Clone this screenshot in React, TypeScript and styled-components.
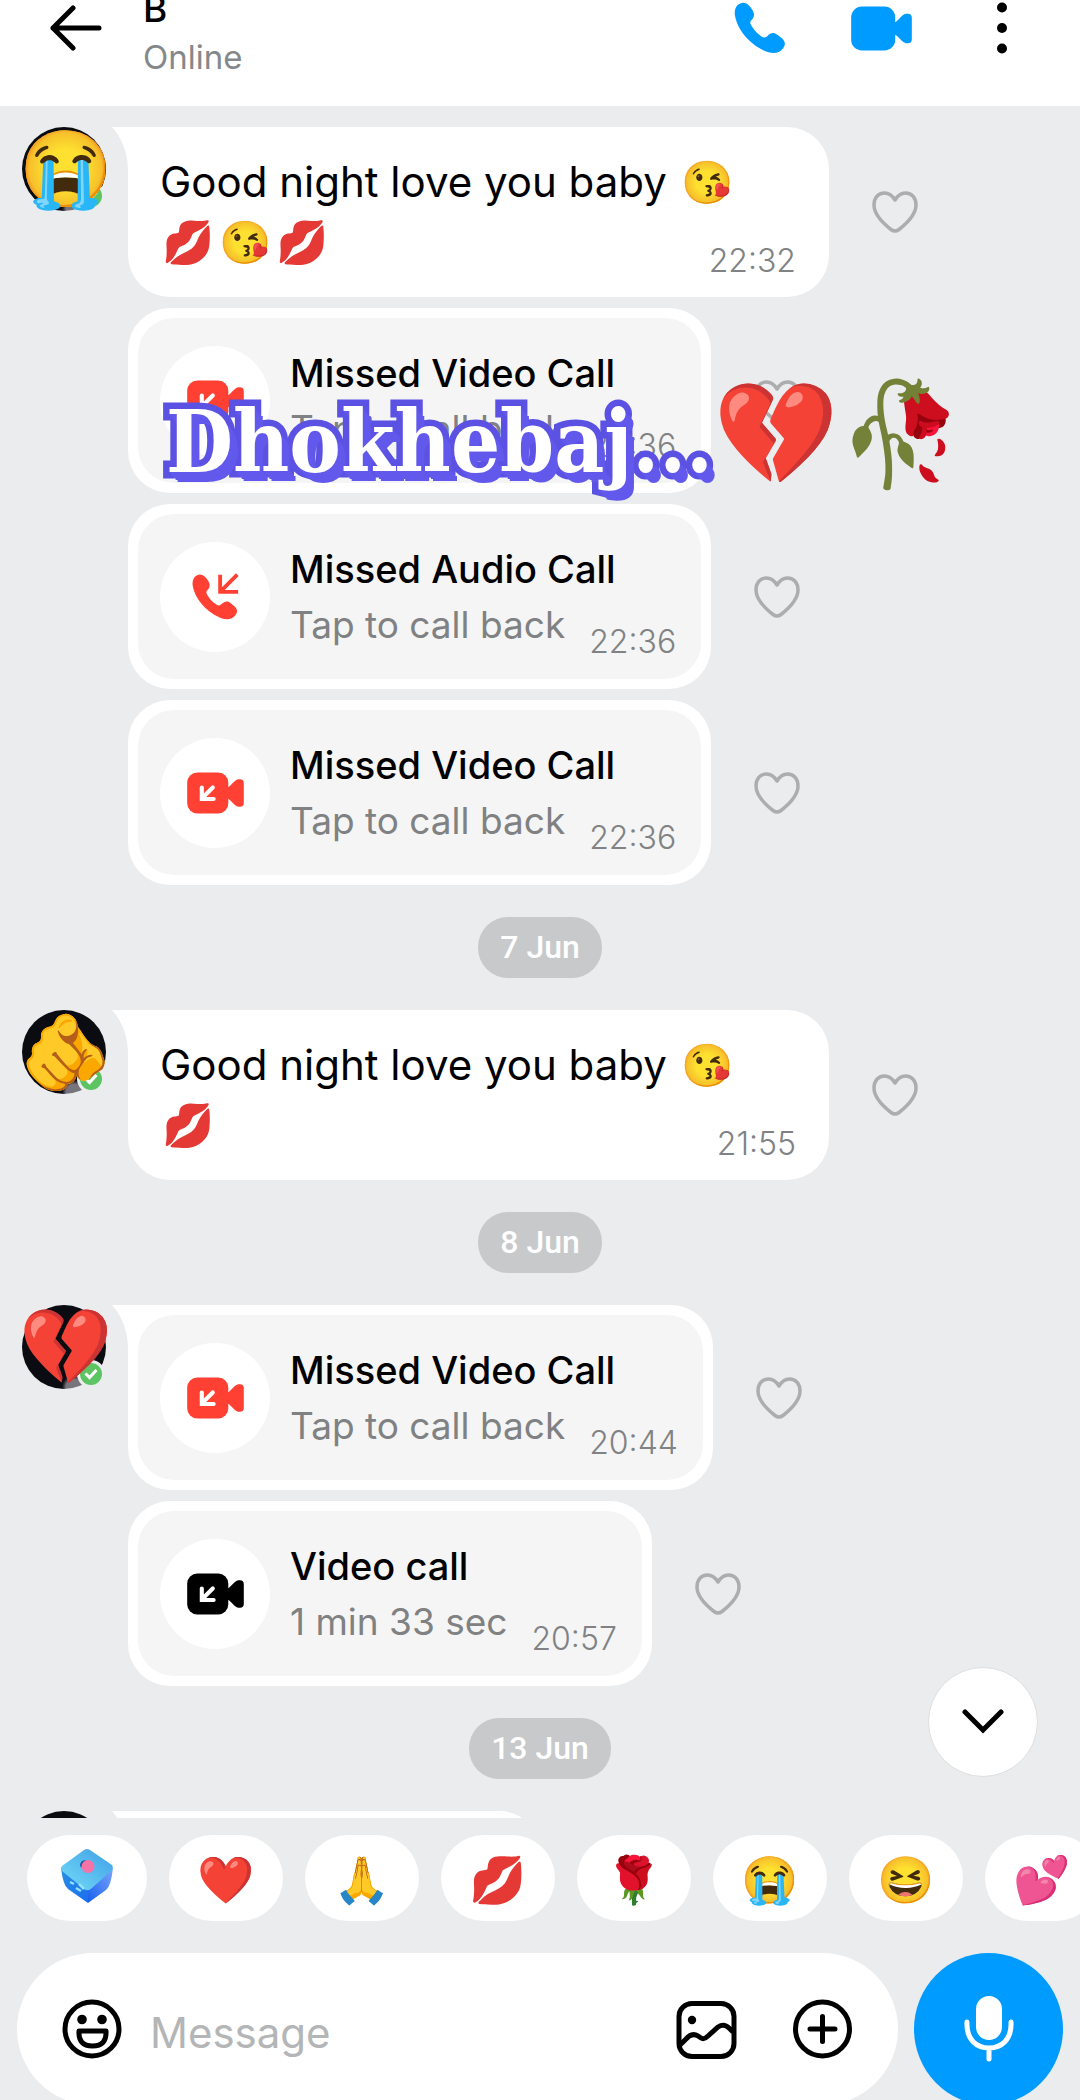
import React from "react";
import styled, { createGlobalStyle } from "styled-components";

const GlobalStyle = createGlobalStyle`
  * { box-sizing: border-box; }
  body {
    margin: 0;
    background: #eaecee;
    color: #000;
    font-family: Inter, "Liberation Sans", sans-serif;
  }
  button {
    border: 0;
    padding: 0;
    background: none;
    color: inherit;
    font: inherit;
    cursor: pointer;
  }
  svg { display: block; }
`;

const emojiFont = `"Noto Color Emoji", "Noto Sans", sans-serif`;
const blue = "#009bff";
const red = "#ff4033";

const Shell = styled.div`
  display: flex;
  flex-direction: column;
  height: 100vh;
  overflow: hidden;
`;

/* ---------- header ---------- */

const Header = styled.header`
  display: flex;
  align-items: center;
  flex: none;
  height: 106px;
  padding: 0 52px 50px 50px;
  background: #fff;
`;

const Contact = styled.div`
  flex: 1;
  padding-top: 10px;
  margin-left: 41px;
`;

const ContactName = styled.h1`
  margin: 0;
  font-size: 37px;
  line-height: 48px;
  font-weight: 500;
`;

const Presence = styled.p`
  margin: 0;
  font-size: 33px;
  line-height: 48px;
  color: #85888a;
`;

const HeaderActions = styled.div`
  display: flex;
  align-items: center;
  gap: 64px;
`;

const IconButton = styled.button<{ $color?: string }>`
  display: flex;
  align-items: center;
  justify-content: center;
  flex: none;
  min-width: 52px;
  color: ${(p) => p.$color || "#000"};
`;

/* ---------- chat ---------- */

const Chat = styled.main`
  position: relative;
  display: flex;
  flex-direction: column;
  flex: 1;
  min-height: 0;
  gap: 32px;
  padding-top: 21px;
  overflow: hidden;
`;

const Group = styled.section`
  display: flex;
  align-items: flex-start;
  flex: none;
  gap: 22px;
  padding-left: 22px;
`;

const Stack = styled.div`
  display: flex;
  flex-direction: column;
  flex: 1;
  gap: 11px;
`;

const Message = styled.div`
  display: flex;
  align-items: center;
  gap: 43px;
`;

const AvatarCircle = styled.div`
  position: relative;
  flex: none;
  width: 84px;
  height: 84px;
  border-radius: 50%;
  background: radial-gradient(circle at 62% 98%, #77747c 0 8px, transparent 12px), #0a0c12;
`;

const AvatarSticker = styled.span`
  position: absolute;
  inset: 0 -6px 0 -2px;
  display: flex;
  align-items: center;
  justify-content: center;
  font: 75px/84px ${emojiFont};
`;

const Badge = styled.span`
  position: absolute;
  right: 1px;
  bottom: 1px;
  display: flex;
  align-items: center;
  justify-content: center;
  width: 28px;
  height: 28px;
  border: 3px solid #eaecee;
  border-radius: 50%;
  background: #5cc463;
  color: #fff;
`;

const Bubble = styled.div<{ $tail?: boolean; $width?: number }>`
  position: relative;
  width: ${(p) => (p.$width ? `${p.$width}px` : "auto")};
  max-width: 65vw;
  border-radius: ${(p) => (p.$tail ? "0 42px 42px 42px" : "42px")};
  background: #fff;
  &::before {
    content: "";
    display: ${(p) => (p.$tail ? "block" : "none")};
    position: absolute;
    top: 0;
    left: -16px;
    width: 16px;
    height: 44px;
    background: #fff;
    clip-path: path("M0 0H16V44C16 26 10 11 0 0Z");
  }
`;

const TextBody = styled.div`
  display: grid;
  min-height: 170px;
  padding: 25px 33px 16px 32px;
`;

const Words = styled.p`
  grid-area: 1 / 1;
  margin: 0;
  font-size: 42px;
  line-height: 60px;
`;

const InlineEmoji = styled.span`
  display: inline-block;
  width: 57px;
  font-family: ${emojiFont};
  line-height: 48px;
  text-align: center;
`;

const Time = styled.time`
  grid-area: 1 / 1;
  align-self: end;
  justify-self: end;
  font-size: 32px;
  line-height: 40px;
  font-weight: 300;
  color: #808284;
`;

const CallFrame = styled.div`
  padding: 10px;
`;

const CallBody = styled.div`
  display: flex;
  align-items: center;
  min-height: 165px;
  padding: 0 25px 0 22px;
  border-radius: 36px;
  background: #f5f5f5;
`;

const CallIcon = styled.div<{ $color: string }>`
  display: flex;
  align-items: center;
  justify-content: center;
  flex: none;
  width: 110px;
  height: 110px;
  margin-right: 20px;
  border-radius: 50%;
  background: #fff;
  color: ${(p) => p.$color};
`;

const CallTitle = styled.h2`
  margin: 0;
  font-size: 38px;
  line-height: 56px;
  font-weight: 500;
  white-space: nowrap;
`;

const CallNote = styled.div`
  display: flex;
  gap: 24px;
  height: 56px;
  font-size: 37px;
  line-height: 56px;
  color: #7f8182;
  white-space: nowrap;
  ${Time} {
    margin-bottom: -9px;
  }
`;

const CallText = styled.div``;

const DayRow = styled.div`
  display: flex;
  justify-content: center;
  flex: none;
`;

const DayPill = styled.span`
  padding: 0 22px;
  border-radius: 30px;
  background: #c7c9ca;
  color: #fff;
  font-family: Roboto, sans-serif;
  font-size: 32px;
  line-height: 61px;
  font-weight: 500;
`;

const Sticker = styled.div`
  position: absolute;
  top: 269px;
  left: 166px;
  display: flex;
  align-items: flex-start;
`;

const StickerWord = styled.span`
  padding-top: 7px;
  font: 700 86px/120px "DejaVu Serif Condensed", "DejaVu Serif", serif;
  color: #fff;
  -webkit-text-stroke: 13px #5b52e3;
  paint-order: stroke fill;
  text-shadow: 1px 2px #6259ec, 2px 4px #6259ec, 4px 6px #6259ec, 6px 8px #6259ec, 8px 10px #6259ec;
`;

const StickerEmoji = styled.span`
  font: 101px/120px ${emojiFont};
`;

const ScrollDown = styled.button`
  position: absolute;
  right: 42px;
  bottom: 41px;
  display: flex;
  align-items: center;
  justify-content: center;
  width: 110px;
  height: 110px;
  border: 1px solid #dcdedf;
  border-radius: 50%;
  background: #fff;
`;

/* ---------- footer ---------- */

const Footer = styled.footer`
  flex: none;
  margin-bottom: -5px;
`;

const QuickRow = styled.div`
  display: flex;
  gap: 22px;
  padding: 17px 0 0 27px;
  overflow: hidden;
`;

const Quick = styled.button<{ $wide?: boolean }>`
  display: flex;
  align-items: center;
  justify-content: center;
  flex: none;
  width: ${(p) => (p.$wide ? 120 : 114)}px;
  height: 86px;
  padding-top: ${(p) => (p.$wide ? 0 : 4)}px;
  padding-bottom: ${(p) => (p.$wide ? 4 : 0)}px;
  border-radius: 43px;
  background: #fff;
  font: 46px/60px ${emojiFont};
`;

const ComposerRow = styled.form`
  display: flex;
  gap: 16px;
  padding: 32px 17px 0;
`;

const Composer = styled.div`
  display: flex;
  align-items: center;
  flex: 1;
  min-width: 0;
  height: 152px;
  padding: 0 45px;
  border-radius: 76px;
  background: #fff;
`;

const MessageInput = styled.input`
  flex: 1;
  min-width: 0;
  height: 70px;
  margin: 0 24px 0 28px;
  padding: 6px 0 0;
  border: 0;
  outline: 0;
  background: none;
  color: #000;
  font: 42px/60px Inter, sans-serif;
  &::placeholder { color: #b3b5b6; opacity: 1; }
`;

const ComposerTools = styled.div`
  display: flex;
  align-items: center;
  gap: 55px;
`;

const MicButton = styled.button`
  display: flex;
  align-items: center;
  justify-content: center;
  flex: none;
  width: 149px;
  height: 152px;
  border-radius: 50%;
  background: ${blue};
  color: #fff;
`;

/* ---------- icons ---------- */

const HANDSET =
  "M9 2C13 1 17 4 20 9C23 14 22 17 19 20C17 22 18 24 20 27C23 32 27 35 30 37C33 39 35 37 36 36C39 33 42 32 46 35L51 39C55 43 54 46 52 49C48 54 43 55 36 53C20 47 5 32 2 15C1 8 4 3 9 2Z";

const BackIcon = () => (
  <svg width="52" height="46" viewBox="0 0 52 46" fill="none" stroke="currentColor" strokeWidth="5" strokeLinecap="round" strokeLinejoin="round">
    <path d="M49 23H3M23 3L3 23L23 43" />
  </svg>
);

const PhoneIcon = () => (
  <svg width="54" height="54" viewBox="0 0 56 56" fill="currentColor">
    <path d={HANDSET} />
  </svg>
);

const MissedPhoneIcon = () => (
  <svg width="48" height="48" viewBox="0 0 56 56" fill="currentColor">
    <path d={HANDSET} />
    <path d="M54 2L34 22M34 2V22H55" fill="none" stroke="currentColor" strokeWidth="4.5" />
  </svg>
);

const VideoIcon = ({ size = 61, arrow = false }: { size?: number; arrow?: boolean }) => (
  <svg width={size} height={Math.round((size * 46) / 62)} viewBox="0 0 62 46" fill="currentColor">
    <rect x="0" y="0.5" width="45" height="45" rx="11" />
    <path d="M44 17C49 15 51 9 56 8Q62 7 62 12V34Q62 39 56 38C51 37 49 31 44 29Z" />
    {arrow && <path d="M28 17L17 28M16 17V29.5H29" fill="none" stroke="#fff" strokeWidth="4.5" strokeLinecap="round" />}
  </svg>
);

const DotsIcon = () => (
  <svg width="12" height="54" viewBox="0 0 12 54" fill="currentColor">
    <circle cx="6" cy="6.500" r="5" />
    <circle cx="6" cy="27" r="5" />
    <circle cx="6" cy="47.500" r="5" />
  </svg>
);

const HeartIcon = () => (
  <svg width="46" height="42" viewBox="0 0 46 42" fill="none" stroke="#abadae" strokeWidth="3.5" strokeLinejoin="round">
    <path d="M23 9C20 4 16 2 12.500 2C6 2 2 7 2 14C2 24 12 33 19 38.500Q23 41.500 27 38.500C34 33 44 24 44 14C44 7 40 2 33.500 2C30 2 26 4 23 9Z" />
  </svg>
);

const ChevronIcon = () => (
  <svg width="42" height="26" viewBox="0 0 42 26" fill="none" stroke="currentColor" strokeWidth="5" strokeLinecap="round" strokeLinejoin="miter">
    <path d="M3 3L21 21L39 3" />
  </svg>
);

const CheckIcon = () => (
  <svg width="14" height="12" viewBox="0 0 14 12" fill="none" stroke="currentColor" strokeWidth="3">
    <path d="M1.500 5.500L5.500 9.500L12.500 2" />
  </svg>
);

const CubeIcon = () => (
  <svg width="54" height="56" viewBox="0 0 54 56">
    <defs>
      <linearGradient id="cubeTop" x1="0" y1="1" x2="1" y2="0">
        <stop offset="0" stopColor="#74dcf8" />
        <stop offset="1" stopColor="#3f9fe6" />
      </linearGradient>
      <linearGradient id="cubeLeft" x1="0" y1="0" x2="1" y2="1">
        <stop offset="0" stopColor="#2a8fe0" />
        <stop offset="1" stopColor="#1a6ff0" />
      </linearGradient>
      <linearGradient id="cubeRight" x1="0" y1="1" x2="1" y2="0">
        <stop offset="0" stopColor="#1560ee" />
        <stop offset="1" stopColor="#7fa6fb" />
      </linearGradient>
    </defs>
    <path d="M1 20L28 41V55L8 41Q3 37 1 20Z" fill="url(#cubeLeft)" />
    <path d="M53 20L28 41V55L46 42Q51 38 53 20Z" fill="url(#cubeRight)" />
    <path d="M24 2Q27 0 30 2L52 17Q54 20 51 23L32 40Q28 44 24 41L2 23Q0 20 2 18Z" fill="url(#cubeTop)" />
    <path d="M10 34L14 36M16 40L21 43M19 36L24 41" stroke="#8fe3fb" strokeWidth="2.500" />
    <path d="M20 18Q20 12 26 12L22 20Z" fill="#27509e" />
    <circle cx="28" cy="18.500" r="6.500" fill="#f573a6" />
  </svg>
);

const SmileIcon = () => (
  <svg width="60" height="60" viewBox="0 0 60 60" fill="none" stroke="currentColor" strokeWidth="5">
    <circle cx="30" cy="30" r="27" />
    <circle cx="20" cy="20.500" r="4.800" fill="currentColor" stroke="none" />
    <circle cx="40" cy="20.500" r="4.800" fill="currentColor" stroke="none" />
    <path d="M17 32H44Q45 47 30.500 47Q16 47 17 32Z" strokeLinejoin="round" />
  </svg>
);

const ImageIcon = () => (
  <svg width="61" height="60" viewBox="0 0 61 60" fill="none" stroke="currentColor" strokeWidth="5">
    <rect x="3" y="4.500" width="55" height="53" rx="13" />
    <circle cx="16" cy="21" r="4.200" fill="currentColor" stroke="none" />
    <path d="M4 46L10 40Q16 33 22 37L25 39Q28 41 32 37L42 28Q48 24 53 29L57 33" />
  </svg>
);

const PlusIcon = () => (
  <svg width="61" height="60" viewBox="0 0 61 60" fill="none" stroke="currentColor" strokeWidth="5" strokeLinecap="round">
    <circle cx="30.500" cy="30" r="27" />
    <path d="M18 30H43M30.500 17.500V42.500" />
  </svg>
);

const MicIcon = () => (
  <svg width="50" height="68" viewBox="0 0 50 68" fill="none" stroke="currentColor" strokeWidth="5" strokeLinecap="round">
    <rect x="12" y="1" width="26" height="44" rx="13" fill="currentColor" stroke="none" />
    <path d="M3 27C2 45 13 53 25 53C37 53 48 45 47 27M25 53V64" />
  </svg>
);

/* ---------- parts ---------- */

const Avatar = ({ sticker }: { sticker?: string }) => (
  <AvatarCircle>
    <Badge><CheckIcon /></Badge>
    {sticker && <AvatarSticker>{sticker}</AvatarSticker>}
  </AvatarCircle>
);

const LikeButton = () => (
  <button type="button" aria-label="Like message"><HeartIcon /></button>
);

const TextMessage = ({ extra, time }: { extra: string[]; time: string }) => (
  <Message>
    <Bubble $tail $width={701}>
      <TextBody>
        <Words>
          Good night love you baby <InlineEmoji>😘</InlineEmoji>
          <br />
          {extra.map((e, i) => <InlineEmoji key={i}>{e}</InlineEmoji>)}
        </Words>
        <Time>{time}</Time>
      </TextBody>
    </Bubble>
    <LikeButton />
  </Message>
);

interface CallProps {
  title: string;
  note: string;
  time: string;
  kind?: "video" | "audio";
  answered?: boolean;
  tail?: boolean;
}

const CallMessage = ({ title, note, time, kind = "video", answered, tail }: CallProps) => (
  <Message>
    <Bubble $tail={tail}>
      <CallFrame>
        <CallBody>
          <CallIcon $color={answered ? "#000" : red}>
            {kind === "video" ? <VideoIcon size={57} arrow /> : <MissedPhoneIcon />}
          </CallIcon>
          <CallText>
            <CallTitle>{title}</CallTitle>
            <CallNote>
              <span>{note}</span>
              <Time>{time}</Time>
            </CallNote>
          </CallText>
        </CallBody>
      </CallFrame>
    </Bubble>
    <LikeButton />
  </Message>
);

const Day = ({ children }: { children: React.ReactNode }) => (
  <DayRow><DayPill>{children}</DayPill></DayRow>
);

const quickReplies = ["❤️", "🙏", "💋", "🌹", "😭", "😆", "💕"];

export default function App() {
  return (
    <Shell>
      <GlobalStyle />
      <Header>
        <IconButton type="button" aria-label="Back"><BackIcon /></IconButton>
        <Contact>
          <ContactName>B</ContactName>
          <Presence>Online</Presence>
        </Contact>
        <HeaderActions>
          <IconButton type="button" aria-label="Audio call" $color={blue}><PhoneIcon /></IconButton>
          <IconButton type="button" aria-label="Video call" $color={blue}><VideoIcon /></IconButton>
          <IconButton type="button" aria-label="More options"><DotsIcon /></IconButton>
        </HeaderActions>
      </Header>

      <Chat>
        <Group>
          <Avatar sticker="😭" />
          <Stack>
            <TextMessage extra={["💋", "😘", "💋"]} time="22:32" />
            <CallMessage title="Missed Video Call" note="Tap to call back" time="22:36" />
            <CallMessage title="Missed Audio Call" note="Tap to call back" time="22:36" kind="audio" />
            <CallMessage title="Missed Video Call" note="Tap to call back" time="22:36" />
          </Stack>
        </Group>
        <Day>7 Jun</Day>
        <Group>
          <Avatar sticker="🫵" />
          <Stack>
            <TextMessage extra={["💋"]} time="21:55" />
          </Stack>
        </Group>
        <Day>8 Jun</Day>
        <Group>
          <Avatar sticker="💔" />
          <Stack>
            <CallMessage title="Missed Video Call" note="Tap to call back" time="20:44" tail />
            <CallMessage title="Video call" note="1 min 33 sec" time="20:57" answered />
          </Stack>
        </Group>
        <Day>13 Jun</Day>
        <Group>
          <Avatar />
          <Stack>
            <Bubble $tail $width={413}><TextBody /></Bubble>
          </Stack>
        </Group>

        <Sticker>
          <StickerWord>Dhokhebaj...</StickerWord>
          <StickerEmoji>💔🥀</StickerEmoji>
        </Sticker>
        <ScrollDown type="button" aria-label="Scroll to latest"><ChevronIcon /></ScrollDown>
      </Chat>

      <Footer>
        <QuickRow>
          <Quick type="button" $wide aria-label="Send gift"><CubeIcon /></Quick>
          {quickReplies.map((e) => <Quick type="button" key={e}>{e}</Quick>)}
        </QuickRow>
        <ComposerRow onSubmit={(e) => e.preventDefault()}>
          <Composer>
            <IconButton type="button" aria-label="Emoji"><SmileIcon /></IconButton>
            <MessageInput type="text" placeholder="Message" aria-label="Message" />
            <ComposerTools>
              <IconButton type="button" aria-label="Attach picture"><ImageIcon /></IconButton>
              <IconButton type="button" aria-label="Add attachment"><PlusIcon /></IconButton>
            </ComposerTools>
          </Composer>
          <MicButton type="button" aria-label="Record voice message"><MicIcon /></MicButton>
        </ComposerRow>
      </Footer>
    </Shell>
  );
}
